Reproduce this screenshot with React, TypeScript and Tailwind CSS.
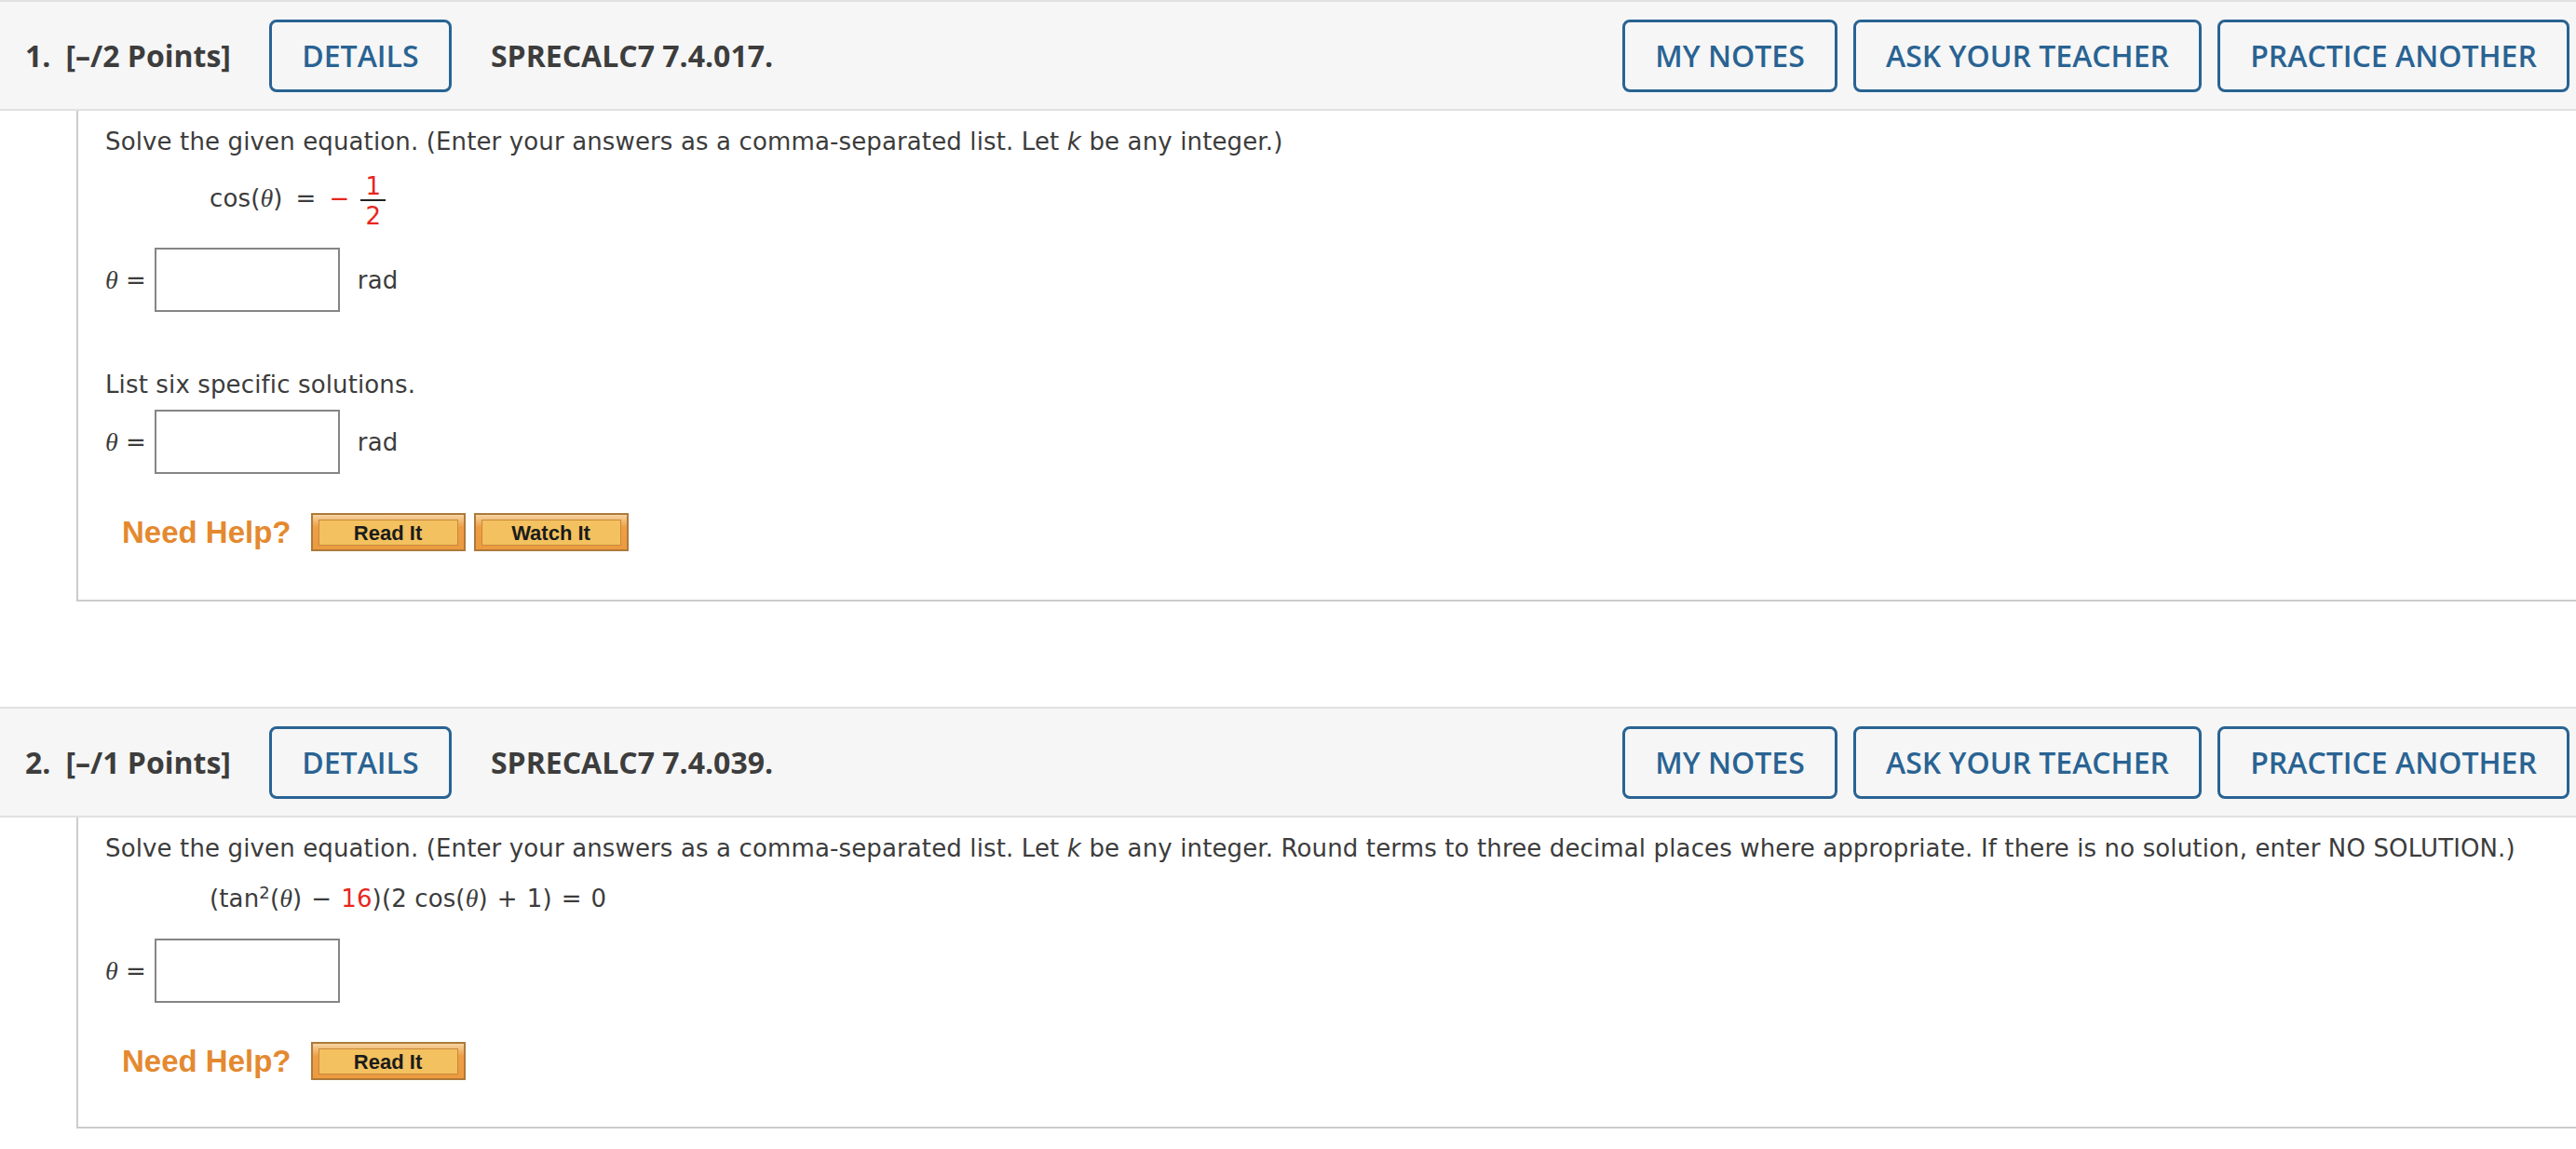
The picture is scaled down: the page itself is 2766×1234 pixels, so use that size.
import React from "react";

const HEAD = "font-['Open_Sans',sans-serif]";
const BODY = "font-['DejaVu_Sans',Verdana,sans-serif] text-[26px] leading-[30px] tracking-[0.13px] text-[#3c3c3c]";
const ARIAL = "font-['Liberation_Sans',Arial,sans-serif]";

function OutlineBtn({ label, w }: { label: string; w: string }) {
  return (
    <button className={`${w} flex h-[78px] items-center justify-center rounded-[8px] border-[3px] border-[#296393] bg-[#f6f6f6] text-[32px] font-semibold text-[#296393] ${HEAD}`}>
      {label}
    </button>
  );
}

function Header({ num, pts, code }: { num: string; pts: string; code: string }) {
  return (
    <div className="flex h-[119px] items-center justify-between border-y-2 border-[#e1e1e1] bg-[#f6f6f6] pl-[27px] pr-[7px]">
      <div className={`flex items-center text-[32px] font-bold text-[#3d3d3d] ${HEAD}`}>
        <span>{num}</span>
        <span className="ml-[16px]">[–/{pts} Points]</span>
        <div className="ml-[41px]">
          <OutlineBtn label="DETAILS" w="w-[196px]" />
        </div>
        <span className="ml-[42px]">{code}</span>
      </div>
      <div className="flex gap-[17px]">
        <OutlineBtn label="MY NOTES" w="w-[231px]" />
        <OutlineBtn label="ASK YOUR TEACHER" w="w-[374px]" />
        <OutlineBtn label="PRACTICE ANOTHER" w="w-[378px]" />
      </div>
    </div>
  );
}

function Theta() {
  return <span className="font-['Liberation_Serif',serif] text-[28px] italic">θ</span>;
}

function Op({ children }: { children: React.ReactNode }) {
  return <span className="mx-[10px]">{children}</span>;
}

function Answer({ unit }: { unit?: string }) {
  return (
    <div className={`flex items-center ${BODY}`}>
      <Theta />
      <span className="ml-[8px]">=</span>
      <div className="ml-[9px] h-[69px] w-[199px] border-2 border-[#858585] bg-white" />
      {unit && <span className="ml-[19px]">{unit}</span>}
    </div>
  );
}

function HelpBtn({ label }: { label: string }) {
  return (
    <div className="h-[41px] w-[166px] border-2 border-[#ad7a3a] bg-[linear-gradient(to_bottom,#f6d4a2,#ee9f46_35%,#ec9a3f)] px-[6px] pb-[4px] pt-[5px]">
      <div className={`flex h-full items-center justify-center border border-[#c8893c] bg-[#f3c15f] text-[22px] font-bold text-[#1b1b1b] ${ARIAL}`}>
        {label}
      </div>
    </div>
  );
}

function NeedHelp({ watch }: { watch?: boolean }) {
  return (
    <div className="flex h-[41px] items-center pl-[18px]">
      <span className={`text-[33px] font-bold leading-[41px] text-[#e4892f] ${ARIAL}`}>Need Help?</span>
      <div className="ml-[21px] flex gap-[9px]">
        <HelpBtn label="Read It" />
        {watch && <HelpBtn label="Watch It" />}
      </div>
    </div>
  );
}

function Red({ children }: { children: React.ReactNode }) {
  return <span className="text-[#e7261d]">{children}</span>;
}

export default function App() {
  return (
    <div className="min-h-[1234px] w-full bg-white">
      {/* question 1 */}
      <Header num="1." pts="2" code="SPRECALC7 7.4.017." />
      <div className="ml-[82px] border-b-2 border-l-2 border-[#cccccc] pb-[52px] pl-[29px] pt-[18px]">
        <p className={BODY}>
          Solve the given equation. (Enter your answers as a comma-separated list. Let <i>k</i> be any integer.)
        </p>
        <div className={`ml-[112px] mt-[20px] flex items-center ${BODY}`}>
          <span className="mb-[7px]">
            cos(<Theta />)
          </span>
          <span className="mb-[7px] ml-[14px]">=</span>
          <span className="mb-[7px] ml-[14px]"><Red>−</Red></span>
          <span className="ml-[12px] flex flex-col items-center">
            <span className="leading-[26px]"><Red>1</Red></span>
            <span className="mt-[1px] h-[2px] w-[27px] bg-[#222]" />
            <span className="mt-[3px] leading-[26px]"><Red>2</Red></span>
          </span>
        </div>
        <div className="mt-[21px]">
          <Answer unit="rad" />
        </div>
        <p className={`mt-[63px] ${BODY}`}>List six specific solutions.</p>
        <div className="mt-[12px]">
          <Answer unit="rad" />
        </div>
        <div className="mt-[42px]">
          <NeedHelp watch />
        </div>
      </div>

      {/* question 2 */}
      <div className="mt-[113px]">
        <Header num="2." pts="1" code="SPRECALC7 7.4.039." />
      </div>
      <div className="ml-[82px] border-b-2 border-l-2 border-[#cccccc] pb-[50px] pl-[29px] pt-[18px]">
        <p className={BODY}>
          Solve the given equation. (Enter your answers as a comma-separated list. Let <i>k</i> be any integer. Round terms to three decimal places where appropriate. If there is no solution, enter NO SOLUTION.)
        </p>
        <p className={`ml-[112px] mt-[24px] ${BODY}`}>
          (tan<sup className="text-[18px]">2</sup>(<Theta />)<Op>−</Op><Red>16</Red>)(2 cos(<Theta />)<Op>+</Op>1)<Op>=</Op>0
        </p>
        <div className="mt-[28px]">
          <Answer />
        </div>
        <div className="mt-[42px]">
          <NeedHelp />
        </div>
      </div>
    </div>
  );
}
